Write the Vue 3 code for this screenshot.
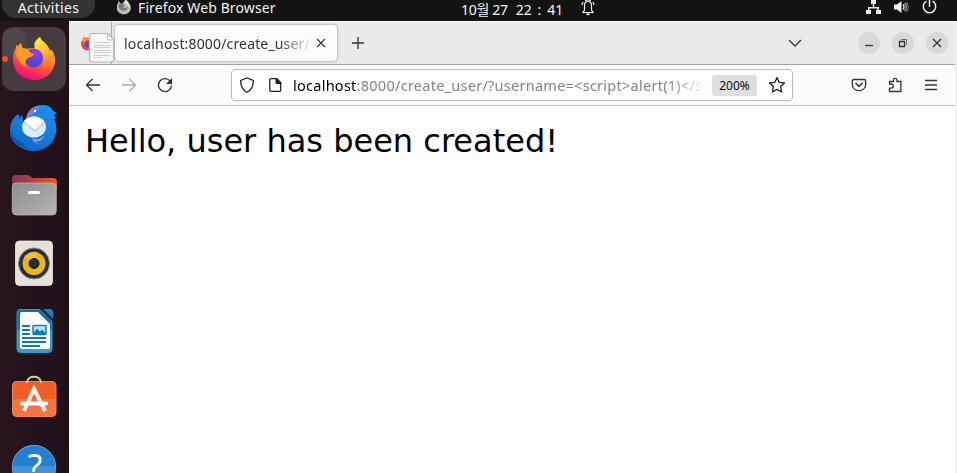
<script setup>
const pageText = 'Hello, user has been created!'
const tabTitle = 'localhost:8000/create_user/?username'
const host = 'localhost'
const path = ':8000/create_user/?username=<script>alert(1)</scr' + 'ipt>'
</script>

<template>
  <div class="desktop">
    <header class="topbar">
      <div class="activities"><span>Activities</span></div>
      <svg class="app-icon" viewBox="0 0 16 16">
        <path fill="#bcbcbc" d="M1 5 3 1l2 3 2-1 3-4 3 4c3 4 2 8-1 10-4 3-9 1-11-3z" />
        <path fill="#777" d="M3 4c2-1 5 0 6 2l-2 1c1 2 4 1 4-1 2 4-3 6-6 4-2-1-3-3-2-6z" />
        <path fill="#eee" d="M9 0c4 3 5 6 4 9 0-3-1-5-4-6z" />
      </svg>
      <span class="app-name">Firefox Web Browser</span>
      <div class="clock"><span>10월 27</span><span class="time">22&nbsp;:&nbsp;41</span></div>
      <svg class="bell" viewBox="0 0 14 16" fill="none" stroke="#eee" stroke-width="1.2">
        <path d="M2 12.5h10L10.500 10V5a3.500 3.500 0 0 0-7 0v5L2 12.500z" />
        <path d="M2 2 .8 5M12 2l1.200 3M4 1l2-1h2l2 1" />
        <path fill="#eee" d="M6 14h2v.5H6z" />
      </svg>
      <svg class="sys net" viewBox="0 0 16 16" fill="#f2f2f2">
        <path d="M5 0h5v4H8.200v3H13v3h2v4h-5v-4h1.500V8.500h-8V10H5v4H0v-4h2V7h4.800V4H5z" />
      </svg>
      <svg class="sys vol" viewBox="0 0 16 16" fill="none" stroke-width="1.300">
        <path fill="#f2f2f2" d="M0 4.500h3L7.500 1v12L3 9.500H0z" />
        <path stroke="#ddd" d="M9 4.500q2 2.500 0 5" />
        <path stroke="#aaa" d="M10.500 3q3.500 4 0 8" />
        <path stroke="#666" d="M12.300 2q4 5 0 10" />
      </svg>
      <svg class="sys power" viewBox="0 0 16 16" fill="none" stroke="#eee" stroke-width="1.500">
        <path d="M4.500 1.200a6.200 6.200 0 1 0 6 0M7.500 0v7" />
      </svg>
    </header>

    <div class="workspace">
      <nav class="dock">
        <div class="tile active">
          <svg viewBox="0 0 64 64">
            <defs>
              <linearGradient id="fxBody" x1=".8" y1="0" x2=".35" y2="1">
                <stop offset="0" stop-color="#ffe24a" /><stop offset=".38" stop-color="#ff9a2c" />
                <stop offset=".68" stop-color="#ff4b3c" /><stop offset="1" stop-color="#e8078b" />
              </linearGradient>
              <radialGradient id="fxGlobe" cx=".6" cy=".25">
                <stop offset="0" stop-color="#a13ff0" /><stop offset="1" stop-color="#5b44c8" />
              </radialGradient>
              <linearGradient id="fxTail" x1="0" y1="0" x2=".3" y2="1">
                <stop offset="0" stop-color="#fff44f" /><stop offset=".55" stop-color="#ffc233" /><stop offset="1" stop-color="#ff7a2c" />
              </linearGradient>
            </defs>
            <path fill="#fff" opacity=".05" d="M1 1h16l7 7v22H1z" />
            <path fill="url(#fxBody)" d="M11 32c0-5 1-8 3-11v-3l3 1 2-3 2 6 11-1 6-11 2 5 7 9 2-1c3 3 4 6 4 10 0 12-9 20-21 20S11 44 11 32z" />
            <circle cx="31.500" cy="31" r="9.500" fill="url(#fxGlobe)" />
            <path fill="url(#fxTail)" d="M38 10c-6 4-7 8-4 12 8 2 10 9 6 17 5 0 9-3 12-9 0-4-1-6-3-7l-1 1c-1-4-3-6-6-9-2-1-3-3-4-5z" />
            <path fill="#ff9b25" d="m18 16 2 5c4 0 7 2 9 5l3 1c-1 3-5 3-7 5-2 2-2 5 1 8-7-1-12-8-12-16z" />
          </svg>
        </div>
        <div class="tile">
          <svg viewBox="0 0 64 64">
            <defs>
              <linearGradient id="tb" x1=".7" y1="0" x2=".3" y2="1">
                <stop offset="0" stop-color="#1b91f3" /><stop offset="1" stop-color="#1268c4" />
              </linearGradient>
            </defs>
            <path fill="url(#tb)" d="M25 21c1-8 9-11 16-11 6 0 9 3 10 6l4 2-3 2 2 3-2 1c7 14-2 31-20 32C18 56 7 46 8 34c0-6 3-12 9-15v5l3-4c1 5 2 8 1 11z" />
            <path fill="#0c58b4" d="M8 34c2 8 8 12 13 14l5 6C15 53 7 45 8 34z" />
            <path fill="#8a78df" d="M25 20c4-7 9-9 14-9-5 2-4 6-8 8l-7 5z" />
            <path fill="#92a8ed" d="M30 43c5 3 9 1 12-2-1 4-5 6-9 5 2 2 3 2 6 3-5 0-8-3-9-6z" />
            <ellipse cx="32" cy="32" rx="12" ry="10.500" fill="#d9edfb" />
            <path fill="#fff" d="M22 26q10-9 20 0l-9 9z" />
            <path fill="none" stroke="#a6b9d3" d="m22 27 11 9 10-9" />
            <circle cx="33" cy="16" r="1.200" fill="#fff" />
          </svg>
        </div>
        <div class="tile">
          <svg viewBox="0 0 64 64">
            <defs>
              <linearGradient id="folderBack"><stop stop-color="#81355c" /><stop offset="1" stop-color="#e85823" /></linearGradient>
              <linearGradient id="folder" x1="0" y1="0" x2="1" y2="1"><stop stop-color="#8c8c8c" /><stop offset="1" stop-color="#b5b5b5" /></linearGradient>
            </defs>
            <path fill="url(#folderBack)" d="M10 25v-9q0-4 4-4h11q2 0 4 2l2 1h20q4 0 4 4v7z" />
            <rect x="10.300" y="20" width="44" height="32" rx="4" fill="url(#folder)" stroke="#c0c0c0" stroke-width=".7" />
            <rect x="26" y="28" width="12" height="3" rx="1.500" fill="#fff" />
          </svg>
        </div>
        <div class="tile">
          <svg viewBox="0 0 64 64">
            <rect x="13.500" y="10" width="37" height="44.500" rx="4" fill="#e6e1d8" stroke="#fffaf1" stroke-width=".7" />
            <circle cx="32" cy="32.500" r="15.500" fill="#292b38" stroke="#8b8a89" stroke-width="1" />
            <circle cx="32" cy="32.500" r="11.500" fill="#eab517" />
            <path fill="#f8ce48" d="M32 32 22 26q6-7 14-5z" opacity=".5" />
            <circle cx="32" cy="32.500" r="5" fill="#2b2b2d" stroke="#111" />
          </svg>
        </div>
        <div class="tile">
          <svg viewBox="0 0 64 64">
            <path fill="#0f6ea9" stroke="#299bca" d="M18 10.500h20l12 12V50q0 3.500-3.500 3.500h-28Q15 53.500 15 50V14q0-3.500 3-3.500z" />
            <path fill="#3c9bc4" d="M15 31h35v19q0 3-3 3H18q-3 0-3-3z" />
            <path fill="#fff" d="M20 13h16l12 12v23q0 2-2 2H20q-2 0-2-2V15q0-2 2-2z" />
            <path fill="#1384b5" d="M41 10h7q3 0 3 3v7z" />
            <path stroke="#107baf" stroke-width="2" d="M20 27h8M20 31h8M20 35h8M20 39h24M20 43h24M20 47h18" />
            <rect x="31" y="26.500" width="13" height="9" rx="1" fill="#b8e7ff" stroke="#107baf" stroke-width="1.500" />
            <path fill="#107baf" d="m31 34.500 4-5 3 3 2-2 4 4v1H31z" />
          </svg>
        </div>
        <div class="tile">
          <svg viewBox="0 0 64 64">
            <rect x="10.500" y="14.500" width="43.500" height="35" rx="4" fill="#ed5f25" stroke="#f3834f" />
            <path fill="#f38153" opacity=".65" d="M11 32h43v14q0 3-3 3H14q-3 0-3-3z" />
            <path fill="none" stroke="#f0c993" stroke-width="2" d="M25 16v-1c1-7 13-7 14 0v1" />
            <path fill="none" stroke="#fff1e8" stroke-width="4" d="m22 44 10-22 11 22" />
            <path stroke="#fff" stroke-width="4" stroke-linecap="round" d="M20 36.500h24" />
          </svg>
        </div>
        <div class="tile help">
          <svg viewBox="0 0 64 64"><circle cx="32" cy="32" r="21.700" fill="#237fd2" stroke="#5aabed" /><path fill="#4292d8" d="M10.500 31h43v8h-43z" /></svg>
          <span>?</span>
        </div>
      </nav>

      <main class="browser">
        <div class="tabstrip">
          <div class="pinned">
            <svg viewBox="0 0 46 43">
              <circle cx="18.500" cy="22" r="6.500" fill="#fa4050" />
              <path fill="#ff9a20" d="m13 18 2-4 2 3 4-2v5l-5 3z" />
              <circle cx="19" cy="22" r="3.500" fill="#6546ca" />
              <path fill="none" stroke="#aaa" d="M42.500 0v43" />
              <path fill="#f6f6f6" stroke="#b7b7b7" stroke-width="1.200" d="M23.500 11.500H39l6 6.500v19q0 3-3 3h-18.500q-3 0-3-3V14.500q0-3 3-3z" />
              <path fill="#fff" stroke="#bbb" d="M38.500 12v4q0 2 2 2H45z" />
              <path stroke="#cfcfcf" d="M25 20.500h16M25 23.500h16M25 25.500h16M25 28.500h16M25 30.500h16M25 33.500h16M25 35.500h8" />
            </svg>
          </div>
          <div class="tab">
            <div class="tab-title">{{ tabTitle }}</div>
            <svg class="tab-close" viewBox="0 0 10 10"><path d="m1 1 8 8M9 1 1 9" /></svg>
          </div>
          <svg class="icon new-tab" viewBox="0 0 16 16"><path d="M8 2v12M2 8h12" /></svg>
          <svg class="icon chevron" viewBox="0 0 16 16"><path d="m2 5 6 6 6-6" /></svg>
          <div class="window-buttons">
            <div class="round"><svg class="icon" viewBox="0 0 16 16"><path d="M4 10.500h8" /></svg></div>
            <div class="round"><svg class="icon" viewBox="0 0 16 16"><path d="M4.500 6.500h5v5h-5z" /><path stroke-width="1" opacity=".65" d="M6 4.500h5.500V10" /></svg></div>
            <div class="round"><svg class="icon" viewBox="0 0 16 16"><path d="m4 4 8 8M12 4l-8 8" /></svg></div>
          </div>
        </div>

        <div class="toolbar">
          <svg class="icon back" viewBox="0 0 16 16"><path d="M15 8H1.500M7.500 2l-6 6 6 6" /></svg>
          <svg class="icon forward" viewBox="0 0 16 16"><path d="M1 8h13.500M8.500 2l6 6-6 6" /></svg>
          <svg class="icon reload" viewBox="0 0 16 16"><path d="M13.200 4.200A6.500 6.500 0 1 0 14.500 8.500" /><path fill="#333" stroke="none" d="M15 1v6H9z" /></svg>
          <div class="urlbar">
            <svg class="icon shield" viewBox="0 0 16 16"><path d="M8 1 1.700 3.500C1.500 9 3 12.500 8 15.300c5-2.800 6.500-6.300 6.300-11.800z" /></svg>
            <svg class="icon page" viewBox="0 0 16 16"><path d="M4 1.700h5.500L13.700 6v7.200q0 1.100-1.100 1.100H4q-1.200 0-1.200-1.100V2.800Q2.800 1.700 4 1.700z" /><path fill="#222" stroke="none" d="M8.500 1H10l4.400 4.500V7H10Q8.500 7 8.500 5.500z" /></svg>
            <div class="url"><span class="host">{{ host }}</span><span class="path">{{ path }}</span></div>
            <div class="zoom"><span>200%</span></div>
            <svg class="icon star" viewBox="0 0 18 18"><path stroke-linejoin="round" d="m9 1.500 2.200 4.900 5.300.6-3.900 3.600 1 5.400L9 13.400 4.400 16l1-5.400L1.500 7l5.300-.6z" /></svg>
          </div>
          <div class="actions">
            <svg class="icon" viewBox="0 0 16 16"><path d="M3 2.500h10q1.700 0 1.700 1.700V7.500a6.700 6.200 0 0 1-13.400 0V4.200Q1.300 2.500 3 2.500z" /><path stroke-width="1.500" d="m4.500 6 3.500 3.400L11.500 6" /></svg>
            <svg class="icon" viewBox="0 0 16 16"><path d="M2.500 7V4.500h4V3a1.700 1.700 0 0 1 3.400 0v1.500h4v10H2.500v-3.300h1.700a2 2 0 0 0 0-4.200z" /></svg>
            <svg class="icon" viewBox="0 0 16 16"><path d="M2 3.500h12M2 8h12M2 12.500h12" /></svg>
          </div>
        </div>
        <section class="page-body">{{ pageText }}</section>
      </main>
      <div class="edge"></div>
    </div>
  </div>
</template>

<style>
body { margin: 0; overflow: hidden; }
</style>

<style scoped>
.desktop { width: 957px; height: 473px; display: flex; flex-direction: column; overflow: hidden; font-family: "Noto Sans", "Noto Sans CJK KR", sans-serif; }
.desktop svg { display: block; flex: none; }
.desktop span { white-space: nowrap; }
.topbar { height: 21px; flex: none; display: flex; align-items: flex-start; background: #131313; color: #f2f2f2; font-size: 14px; line-height: 16px; }
.activities { width: 93px; height: 18px; margin-left: 2px; flex: none; background: #333; border-radius: 0 0 14px 14px; text-align: center; }
.activities span { letter-spacing: .3px; }
.app-icon { width: 16px; height: 16px; margin-left: 21px; }
.app-name { width: 140px; flex: none; margin-left: 6px; letter-spacing: .12px; }
.clock { width: 104px; flex: none; display: flex; gap: 8px; margin-left: 183px; padding-top: 2px; letter-spacing: -.3px; }
.time { letter-spacing: 0; word-spacing: 2.2px; }
.bell { width: 14px; height: 16px; margin-left: 16px; }
.sys { width: 16px; height: 16px; }
.net { margin-left: 271px; }
.vol { margin-left: 12px; }
.power { margin-left: 12px; }
.workspace { display: flex; height: 452px; }
.dock { width: 67px; flex: none; display: flex; flex-direction: column; gap: 4px; padding: 6px 0 0 2px; background: linear-gradient(90deg, #28141d, #20111a); }
.tile { width: 64px; height: 64px; flex: none; border-radius: 12px; position: relative; }
.tile svg { width: 64px; height: 64px; }
.active { background: #473b42; }
.active::before { content: ""; position: absolute; left: 0; top: 29px; width: 6px; height: 6px; border-radius: 50%; background: #e95420; }
.help span { position: absolute; inset: 7px 0 0 2px; text-align: center; color: #fff; font-size: 34px; line-height: 48px; }
.browser { width: 886px; flex: none; display: flex; flex-direction: column; background: #fff; }
.tabstrip { height: 42px; flex: none; display: flex; align-items: center; background: #eaeaea; border-top: 1px solid #fff; border-bottom: 1px solid #a2a2a2; }
.pinned { width: 46px; height: 42px; flex: none; }
.pinned svg { width: 46px; height: 43px; }
.tab { width: 222px; height: 36px; flex: none; display: flex; align-items: center; background: #fcfcfc; border-radius: 4px; box-shadow: 0 0 3px #888; }
.tab-title { width: 189px; flex: none; margin-left: 9px; overflow: hidden; white-space: nowrap; color: #333; font-size: 14px; letter-spacing: .16px; mask-image: linear-gradient(90deg, #000 155px, transparent 189px); }
.tab-close { width: 10px; height: 10px; margin-left: 3px; fill: none; stroke: #333; stroke-width: 1.1; }
.icon { width: 16px; height: 16px; fill: none; stroke: #333; stroke-width: 1.3; }
.new-tab { margin-left: 13px; }
.chevron { margin-left: 421px; }
.window-buttons { display: flex; gap: 12px; margin-left: 55px; }
.round { width: 22px; height: 22px; display: flex; align-items: center; justify-content: center; border-radius: 50%; background: #d9d9d9; }
.toolbar { height: 40px; flex: none; display: flex; align-items: center; background: #fbfbfb; border-bottom: 1px solid #c6c6c6; }
.back { margin-left: 16px; }
.forward { margin-left: 20px; stroke: #aaa; }
.reload { margin-left: 20px; }
.urlbar { width: 560px; height: 30px; flex: none; display: flex; align-items: center; margin-left: 58px; border: 1px solid #bdbdbd; border-radius: 4px; background: #fff; }
.urlbar .icon { stroke: #222; }
.shield { margin-left: 7px; }
.page { margin-left: 12px; }
.url { width: 415px; flex: none; margin-left: 10px; overflow: hidden; white-space: nowrap; color: #838383; font-size: 14.500px; letter-spacing: .26px; mask-image: linear-gradient(90deg, #000 375px, transparent 415px); }
.host { color: #000; }
.zoom { width: 45px; height: 21px; flex: none; margin-left: 4px; border-radius: 3px; background: #dedede; color: #111; font-size: 12px; line-height: 21px; text-align: center; }
.urlbar .star { width: 18px; height: 18px; margin-left: 11px; }
.actions { display: flex; gap: 20px; margin-left: 58px; }
.page-body { padding: 16px; color: #000; font-family: "DejaVu Sans", sans-serif; font-size: 32px; line-height: 38px; white-space: nowrap; }
.edge { width: 2px; flex: none; background: #eee; }
</style>
